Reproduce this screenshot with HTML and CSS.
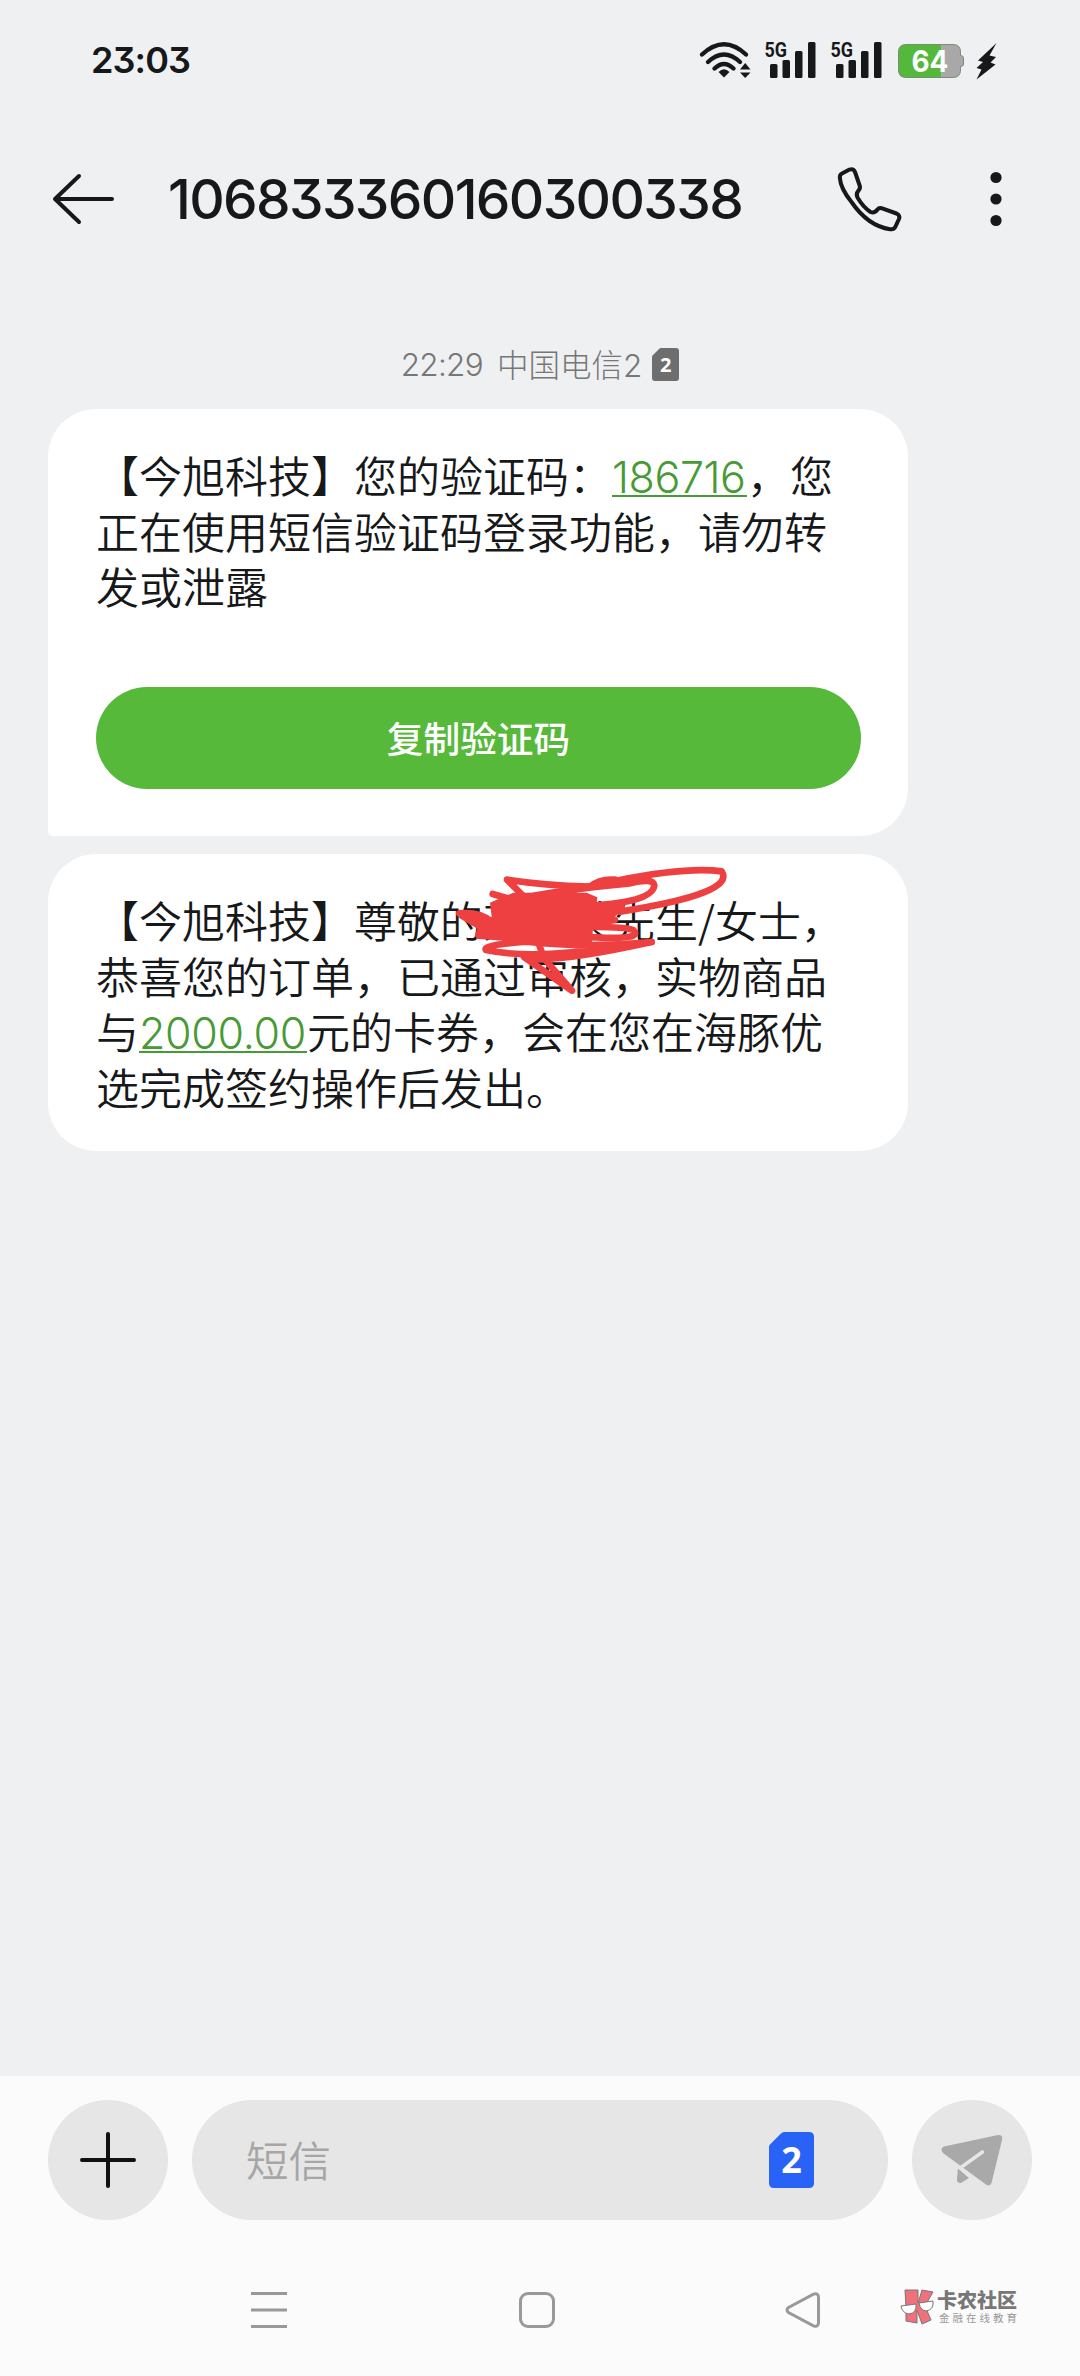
FILE: index.html
```html
<!DOCTYPE html>
<html lang="zh-CN">
<head>
<meta charset="utf-8">
<title>短信</title>
<link rel="stylesheet" href="styles.css">
</head>
<body>
<div class="phone">
  <div class="status">
    <span class="clock">23:03</span>
    <div class="status-icons">
      <svg class="wifi" viewBox="0 0 52 36" width="52" height="36">
        <g fill="none" stroke="#17181a" stroke-width="4.4" stroke-linecap="round">
          <path d="M3 12.500Q25 -8 47 12.500"/>
          <path d="M9 20Q25 5 41 20"/>
          <path d="M15.500 26.500Q25 17.500 34.500 26.500"/>
        </g>
        <path d="M25 35.500L19.500 30Q25 24.500 30.500 30Z" fill="#17181a"/>
        <path d="M41 27.500h10.500L46.200 21zM41 30.500h10.500L46.200 36z" fill="#17181a"/>
      </svg>
      <svg class="signal" viewBox="0 0 52 38" width="52" height="38">
        <text class="net" x="0.500" y="16" textLength="22.500" lengthAdjust="spacingAndGlyphs">5G</text>
        <g fill="#17181a"><rect x="6" y="23" width="7.500" height="14" rx="1.500"/><rect x="18.500" y="19" width="7.500" height="18" rx="1.500"/><rect x="31" y="10" width="7.500" height="27" rx="1.500"/><rect x="44" y="1" width="7.500" height="36" rx="1.500"/></g>
      </svg>
      <svg class="signal" viewBox="0 0 52 38" width="52" height="38">
        <text class="net" x="0.500" y="16" textLength="22.500" lengthAdjust="spacingAndGlyphs">5G</text>
        <g fill="#17181a"><rect x="6" y="23" width="7.500" height="14" rx="1.500"/><rect x="18.500" y="19" width="7.500" height="18" rx="1.500"/><rect x="31" y="10" width="7.500" height="27" rx="1.500"/><rect x="44" y="1" width="7.500" height="36" rx="1.500"/></g>
      </svg>
      <svg class="battery" viewBox="0 0 66 34" width="66" height="34">
        <path d="M8 .5H55Q62.500 .5 62.500 8V11.500Q65.500 11.500 65.500 14V20Q65.500 22.500 62.500 22.500V26Q62.500 33.500 55 33.500H43.500V.5Z" fill="#a8a8a8"/>
        <path d="M8 .5H43.500V33.500H8Q.5 33.500 .5 26V8Q.5 .5 8 .5Z" fill="#54b93a"/>
        <path d="M8 .5H55Q62.500 .5 62.500 8V11.500Q65.500 11.500 65.500 14V20Q65.500 22.500 62.500 22.500V26Q62.500 33.500 55 33.500H8Q.5 33.500 .5 26V8Q.5 .5 8 .5Z" fill="none" stroke="#7e8a7b" stroke-width="1"/>
        <text class="level" x="32" y="28" text-anchor="middle" textLength="37" lengthAdjust="spacingAndGlyphs">64</text>
      </svg>
      <svg class="bolt" viewBox="0 0 21 37" width="21" height="37"><path d="M20.500 0L2 17.500L7 19L.5 25L5.500 26.500L.5 36.500L19.500 21.500L14.500 19.500L20 14L13.500 12.500Z" fill="#17181a"/></svg>
    </div>
  </div>

  <header class="topbar">
    <svg class="back" viewBox="0 0 62 52" width="62" height="52"><path d="M27 3L3 26L27 49M3 26H60" fill="none" stroke="#17181a" stroke-width="4" stroke-linecap="round" stroke-linejoin="round"/></svg>
    <h1 class="title">106833360160300338</h1>
    <svg class="call" viewBox="0 0 66 66" width="66" height="66"><path d="M5 7.500L12.500 3.600Q16.500 2.200 18 6L22.800 20Q23.500 22.500 21.500 24.500Q18.600 28 20.500 31.500Q26 41 33.500 46Q37.500 47.500 40.500 43.500Q42 41.500 44.500 42.200L59.500 47.500Q63 49 62.200 52.500L58.500 60.500Q57 64 53 63.200Q31 60 14.500 36Q3.500 22.500 2.800 11.500Q2.700 8.700 5 7.500Z" fill="none" stroke="#17181a" stroke-width="4" stroke-linejoin="round"/></svg>
    <svg class="more" viewBox="0 0 12 56" width="12" height="56"><g fill="#17181a"><circle cx="6" cy="6.500" r="5.600"/><circle cx="6" cy="28" r="5.600"/><circle cx="6" cy="49.500" r="5.600"/></g></svg>
  </header>

  <main class="thread">
    <div class="stamp">
      <span class="stamp-time">22:29</span>
      <span class="stamp-carrier">中国电信2</span>
      <svg viewBox="0 0 27 33" width="27" height="33"><path d="M9 0H24Q27 0 27 3V30Q27 33 24 33H3Q0 33 0 30V9Q0 7.800 1 7L7 1Q8 0 9 0Z" fill="#6e6e6e"/><text class="sim-small" x="13.800" y="24" text-anchor="middle">2</text></svg>
    </div>

    <section class="bubble first">
      <p class="text">【今旭科技】您的验证码：<a class="link code">186716</a>，您<br>正在使用短信验证码登录功能，请勿转<br>发或泄露</p>
      <button class="copy">复制验证码</button>
    </section>

    <section class="bubble second">
      <p class="text">【今旭科技】尊敬的某某某先生<span class="slash">/</span>女士，<br>恭喜您的订单，已通过审核，实物商品<br>与<a class="link sum">2000.00</a>元的卡券，会在您在海豚优<br>选完成签约操作后发出。</p>
      <svg class="scribble" viewBox="0 0 1320 480" width="440" height="160">
        <g fill="none" stroke="#ee4040" stroke-width="20" stroke-linecap="round" stroke-linejoin="round">
          <path d="M645 89Q600 85 570 110Q430 106 321 89L370 138"/>
          <path d="M278 132L340 150Q470 120 690 100Q760 82 763 107Q755 165 500 170"/>
          <path d="M360 150Q570 110 650 92Q860 50 965 64Q1010 130 660 185"/>
          <path d="M178 190Q240 185 275 215L190 200L245 232L235 255L590 262Q730 270 700 240Q660 225 440 235"/>
          <path d="M415 278L432 325L516 422L372 321Q440 345 755 276"/>
          <path d="M755 276Q560 295 380 275Q245 285 258 300Q400 330 640 290"/>
          <path d="M560 190L665 172L560 205L645 210L570 222"/>
        </g>
        <path d="M270 158L340 128L560 128L592 142L590 160L640 165L660 185L630 215L580 225L575 278L360 276L228 266L240 222L275 200Z" fill="#ee4040"/>
      </svg>
    </section>
  </main>

  <footer class="composer">
    <div class="round"><svg viewBox="0 0 60 60" width="60" height="60"><path d="M30 4V56M4 30H56" stroke="#111" stroke-width="4" stroke-linecap="round"/></svg></div>
    <div class="field">
      <span class="placeholder">短信</span>
      <svg viewBox="0 0 45 56" width="45" height="56"><path d="M15 0H40Q45 0 45 5V51Q45 56 40 56H5Q0 56 0 51V15Q0 13.500 1 12.500L12 1.500Q13.500 0 15 0Z" fill="#2962f6"/><text class="sim-large" x="22.500" y="41" text-anchor="middle">2</text></svg>
    </div>
    <div class="round"><svg viewBox="0 0 62 52" width="62" height="52"><g fill="#a9a9a9"><path d="M3 12.500L57 1Q62 .5 61 6L50.500 49Q49 53 45 50.500L2 19Q-1.500 14.500 3 12.500Z"/><path d="M17 34L28 44L20 49Q15.500 49.500 16 45Z"/></g><path d="M41.500 18L19 34L30 43" fill="none" stroke="#e6e6e6" stroke-width="3.500" stroke-linecap="round"/></svg></div>
  </footer>

  <nav class="nav">
    <svg viewBox="0 0 36 36" width="36" height="36"><path d="M0 1.500H36M0 18H36M0 34.500H36" stroke="#999" stroke-width="3"/></svg>
    <svg viewBox="0 0 36 36" width="36" height="36"><rect x="1.500" y="1.500" width="33" height="33" rx="7.500" fill="none" stroke="#999" stroke-width="3"/></svg>
    <svg viewBox="0 0 36 36" width="36" height="36"><path d="M3.500 15.500L28.500 2.200Q33.500 .5 33.500 5.500V30.500Q33.500 35.500 28.500 33.800L3.500 20.500Q.5 18 3.500 15.500Z" fill="none" stroke="#999" stroke-width="3"/></svg>
    <div class="brand">
      <svg viewBox="0 0 34 36" width="34" height="36">
        <g fill="#f0717c" stroke="#777" stroke-width="1" stroke-linejoin="round"><path d="M5 1H18V14L22 1L33 3L25 17L31 31L22 35L17 21V34L6 32V19Z"/></g>
        <g fill="#fff" stroke="#777" stroke-width="1"><path d="M1 17L16 15Q17 24 9 25Q2 24 1 17ZM19 14L33 12Q34 21 26 22Q20 21 19 14Z"/></g>
      </svg>
      <div class="brand-text"><b>卡农社区</b><span>金融在线教育</span></div>
    </div>
  </nav>
</div>
</body>
</html>
```
FILE: styles.css
```css
* { box-sizing: border-box; }

body {
  margin: 0;
  font-family: "Inter", "Noto Sans CJK SC", sans-serif;
  font-feature-settings: "cv09" 1;
  color: #17181a;
}

.phone {
  display: flex;
  flex-direction: column;
  width: 1080px;
  height: 2376px;
  background: #eff0f2;
  overflow: hidden;
}

svg { display: block; flex: none; overflow: visible; }

.status {
  display: flex;
  justify-content: space-between;
  align-items: center;
  height: 120px;
  padding: 0 83px 0 91px;
}
.clock { font-size: 36px; font-weight: 600; letter-spacing: -0.900px; }
.status-icons { display: flex; align-items: center; }
.signal { margin-left: 14px; }
.wifi + .signal { margin-left: 13px; }
.battery { margin: 2px 0 0 16px; }
.bolt { margin: 2px 0 0 12px; }
.net { font: 700 21px "Roboto", sans-serif; fill: #17181a; }
.level { font: 700 30px "Inter", sans-serif; fill: #fff; }

.topbar {
  display: flex;
  align-items: center;
  height: 157px;
  padding: 0 78px 0 52px;
}
.title {
  flex: 1;
  margin: 0 0 0 54px;
  font-size: 55px;
  font-weight: 500;
  line-height: 80px;
  letter-spacing: -1.650px;
  white-space: nowrap;
}
.more { margin-left: 87px; }

.thread { flex: 1; padding: 62px 48px 0; }
.stamp {
  display: flex;
  align-items: center;
  justify-content: center;
  height: 50px;
  font-size: 31.500px;
  font-weight: 300;
  color: #777;
}
.stamp-time { letter-spacing: -0.700px; }
.stamp-carrier { margin: 0 10px 0 14px; position: relative; top: -1px; }
.sim-small { font: 700 20px "Open Sans", sans-serif; fill: #fff; }

.bubble {
  position: relative;
  width: 860px;
  padding: 38px 48px 48px;
  background: #fff;
  border-radius: 48px;
}
.first { height: 427px; margin-top: 20px; border-bottom-left-radius: 5px; }
.second { height: 297px; margin-top: 18px; }
.text {
  margin: 0;
  font-family: "Noto Sans CJK SC", sans-serif;
  font-size: 43px;
  font-weight: 350;
  line-height: 55.500px;
  white-space: nowrap;
}
.link {
  display: inline-block;
  height: 50px;
  padding-top: 2px;
  line-height: 56px;
  vertical-align: top;
  font-family: "Inter", sans-serif;
  color: #479a35;
  border-bottom: 2px solid #479a35;
}
.code { width: 135px; letter-spacing: -0.400px; }
.sum { width: 168px; letter-spacing: -0.300px; }
.slash { display: inline-block; width: 17px; }
.copy {
  display: block;
  width: 765px;
  height: 102px;
  margin: 73px 0 0;
  padding: 0 0 2px;
  border: 0;
  border-radius: 51px;
  background: #56b93a;
  color: #fff;
  font: 500 36.700px "Noto Sans CJK SC", sans-serif;
}
.scribble { position: absolute; left: 352px; top: -4px; }

.composer {
  display: flex;
  gap: 24px;
  height: 180px;
  padding: 24px 48px 0;
  background: #fbfbfb;
}
.round {
  display: flex;
  align-items: center;
  justify-content: center;
  width: 120px;
  height: 120px;
  border-radius: 50%;
  background: #e6e6e6;
}
.field {
  flex: 1;
  display: flex;
  align-items: center;
  justify-content: space-between;
  height: 120px;
  padding: 0 74px 0 54px;
  border-radius: 60px;
  background: #e6e6e6;
}
.placeholder { margin-top: -3px; font-family: "Noto Sans CJK SC", sans-serif; font-size: 42.500px; font-weight: 350; color: #a6a6a6; }
.sim-large { font: 700 36px "Open Sans", sans-serif; fill: #fff; }

.nav {
  display: flex;
  height: 120px;
  padding: 36px 0 0 251px;
  background: #fbfbfb;
}
.nav > svg + svg { margin-left: 232px; }
.nav > svg + svg ~ svg { margin-left: 230px; }
.brand { display: flex; gap: 3px; margin: -3px 0 0 79px; }
.brand-text { display: flex; flex-direction: column; font-family: "Noto Sans CJK SC", sans-serif; white-space: nowrap; }
.brand-text b { font-size: 20px; font-weight: 900; line-height: 22px; color: #777; }
.brand-text span { margin-left: 2px; font-size: 10.500px; line-height: 14px; letter-spacing: 3px; color: #999; }
```
